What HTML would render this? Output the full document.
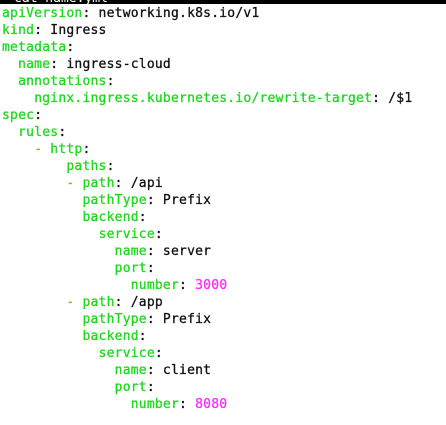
<!DOCTYPE html>
<html><head><meta charset="utf-8"><style>
html,body{margin:0;padding:0;background:#fff;width:446px;height:425px;overflow:hidden}
*{font-family:"DejaVu Sans Mono","Liberation Mono",monospace}
.bar{position:absolute;left:0;top:0;width:446px;height:4px;background:#000;overflow:hidden}
.bar span{position:absolute;left:14px;top:-9px;color:#fff;font-size:13px;white-space:pre}
pre{position:absolute;left:2px;top:5px;margin:0;font-size:13px;line-height:17px;letter-spacing:0.22px;color:#111;white-space:pre;-webkit-text-stroke:0.3px currentColor}
pre span{font-size:13px}
.k{color:#1ed81e}.n{color:#ff2cff}.d{color:#a8a820}
</style></head><body>
<div class="bar"><span>cat name.yml</span></div>
<pre><span class="k">apiVersion</span>: networking.k8s.io/v1
<span class="k">kind</span>: Ingress
<span class="k">metadata</span>:
  <span class="k">name</span>: ingress-cloud
  <span class="k">annotations</span>:
    <span class="k">nginx.ingress.kubernetes.io/rewrite-target</span>: /$1
<span class="k">spec</span>:
  <span class="k">rules</span>:
    <span class="d">-</span> <span class="k">http</span>:
        <span class="k">paths</span>:
        <span class="d">-</span> <span class="k">path</span>: /api
          <span class="k">pathType</span>: Prefix
          <span class="k">backend</span>:
            <span class="k">service</span>:
              <span class="k">name</span>: server
              <span class="k">port</span>:
                <span class="k">number</span>: <span class="n">3000</span>
        <span class="d">-</span> <span class="k">path</span>: /app
          <span class="k">pathType</span>: Prefix
          <span class="k">backend</span>:
            <span class="k">service</span>:
              <span class="k">name</span>: client
              <span class="k">port</span>:
                <span class="k">number</span>: <span class="n">8080</span></pre>
</body></html>
